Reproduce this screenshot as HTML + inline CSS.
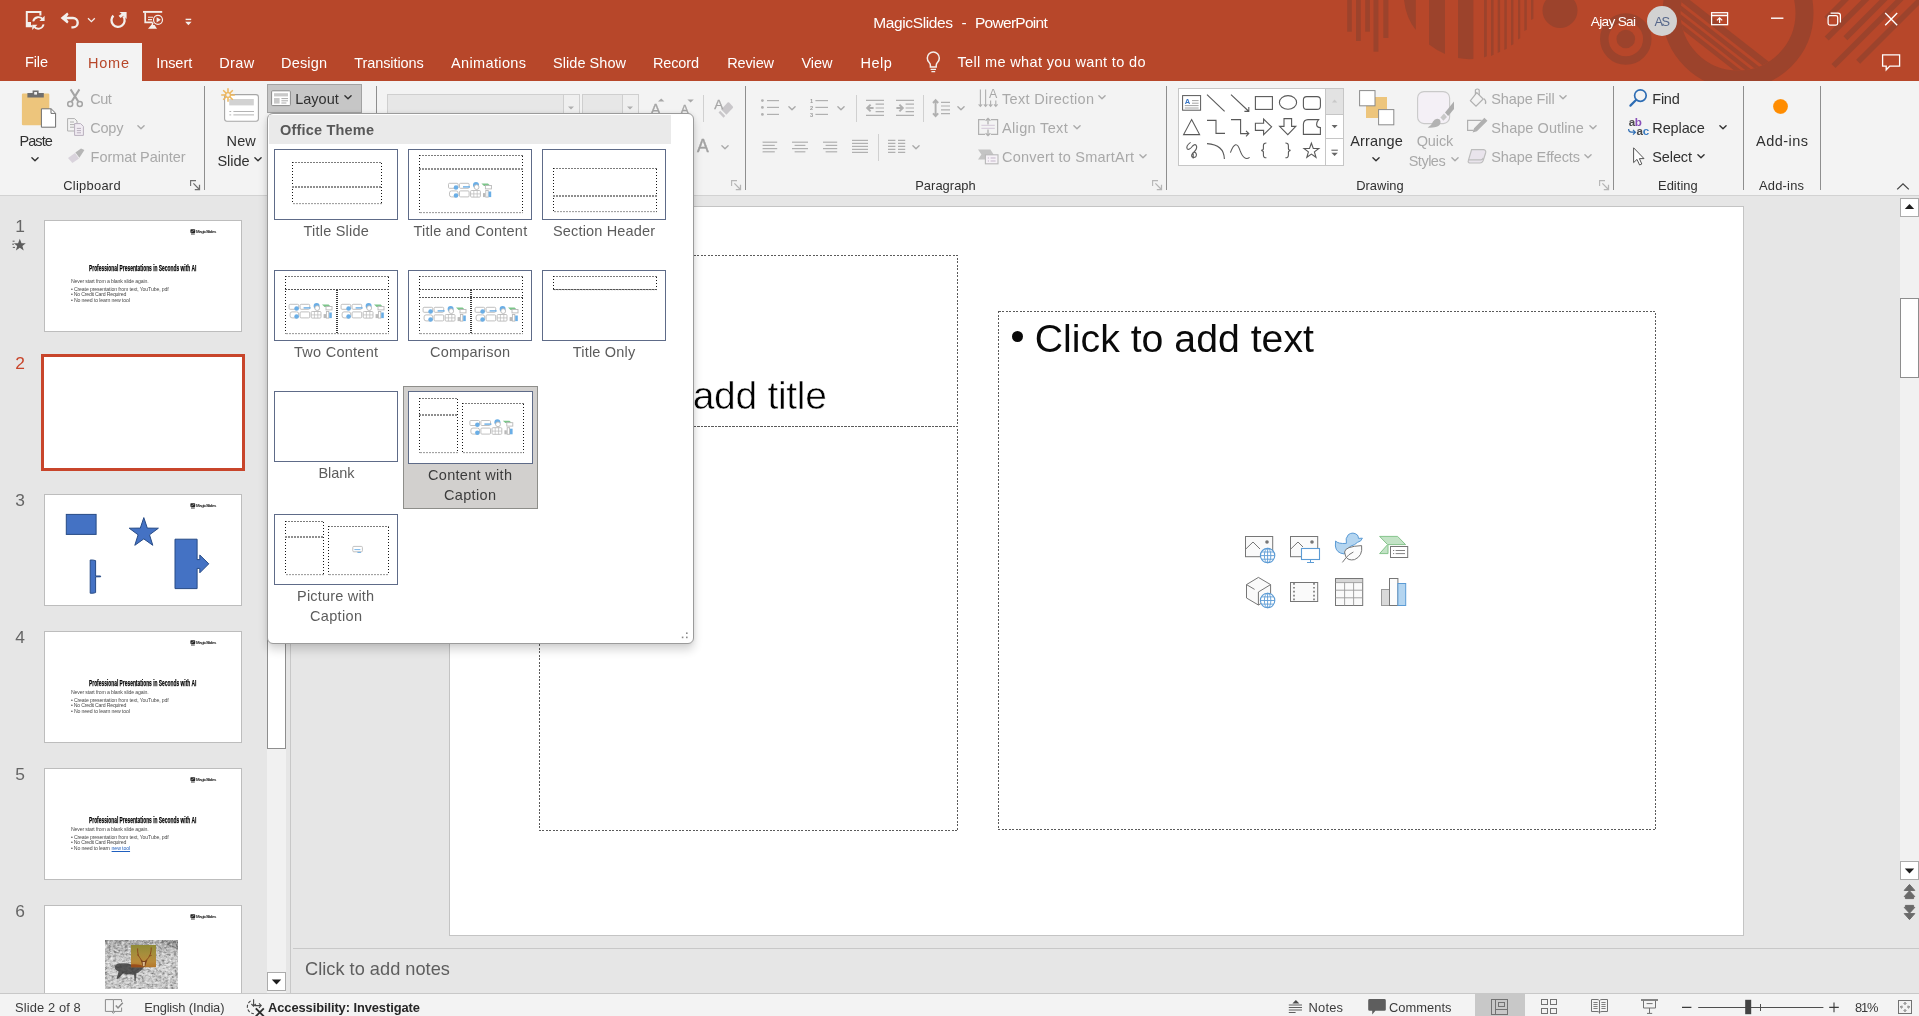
<!DOCTYPE html>
<html lang="en"><head><meta charset="utf-8"><title>MagicSlides - PowerPoint</title>
<style>
html,body{margin:0;padding:0;}
body{width:1919px;height:1016px;overflow:hidden;background:#E6E6E6;position:relative;font-family:"Liberation Sans",sans-serif;}
.b{position:absolute;box-sizing:border-box;display:block;}
.t{position:absolute;white-space:pre;display:block;}
svg{overflow:visible;}
#app{position:absolute;left:0;top:0;width:1919px;height:1016px;overflow:hidden;will-change:transform;}
</style></head>
<body>
<div id="app">
<!-- sec_title -->
<div class="b" style="left:0px;top:0px;width:1919px;height:81px;background:#B7472A;"></div>
<svg class="b" style="left:0;top:0" width="1919" height="81" viewBox="0 0 1919 81">
<defs><clipPath id="cpin"><circle cx="1738" cy="13" r="57.6"/></clipPath>
<clipPath id="cpr"><rect x="1820" y="0" width="99" height="81"/></clipPath></defs>
<g fill="#9C432C"><rect x="1347.2" y="0" width="4.6" height="31.7"/><rect x="1356" y="0" width="4.8" height="41"/><rect x="1365.2" y="0" width="4.7" height="31.7"/><rect x="1373.5" y="0" width="4.9" height="51.7"/><rect x="1383.3" y="0" width="5.1" height="38"/><path d="M1404 0 Q1406 18 1415.8 30 L1415.8 0 Z"/><path d="M1429 0 L1445 0 L1445 54 Q1436 50 1429 44.5 Z"/><path d="M1458 0 L1473.4 0 L1473.4 59 Q1465 59.5 1458 58 Z"/><path d="M1484 0 L1486.8 0 L1486.8 56.3 L1484 57.5 Z"/><path d="M1491 0 L1493.6 0 L1493.6 54.8 L1491 56 Z"/><path d="M1497.7 0 L1500.1 0 L1500.1 51.8 L1497.7 53 Z"/><path d="M1504.3 0 L1506.8 0 L1506.8 48.8 L1504.3 50 Z"/><path d="M1511 0 L1513.4 0 L1513.4 44.3 L1511 45.5 Z"/><path d="M1518 0 L1520.2 0 L1520.2 38.3 L1518 39.5 Z"/><path d="M1524.3 0 L1526.8 0 L1526.8 29.8 L1524.3 31 Z"/><path d="M1531 0 L1533.4 0 L1533.4 18.8 L1531 20 Z"/><circle cx="1560" cy="10.5" r="17.5"/><circle cx="1625.8" cy="39" r="21.5" fill="none" stroke="#9C432C" stroke-width="8.5"/><circle cx="1625.8" cy="39" r="9.3"/><circle cx="1738" cy="13" r="66.5" fill="none" stroke="#9C432C" stroke-width="18"/><g clip-path="url(#cpin)"><path d="M1640.4 -34.3 L1790.1 82.7" stroke="#9C432C" stroke-width="6.8" fill="none"/><path d="M1635.1 -27.5 L1784.9 89.5" stroke="#9C432C" stroke-width="4.3" fill="none"/><path d="M1630.8 -22.0 L1780.5 95.0" stroke="#9C432C" stroke-width="4.1" fill="none"/><path d="M1626.5 -16.5 L1776.2 100.5" stroke="#9C432C" stroke-width="4.4" fill="none"/></g><g clip-path="url(#cpr)"></g></g>
<g stroke="#9C432C" stroke-width="5.6" fill="none">
<path d="M1826.3 18.7 L1855 -10"/><path d="M1826.7 38.6 L1875.3 -10"/><path d="M1845.4 38.2 L1893.6 -10"/><path d="M1833.5 66.1 L1909.6 -10"/><path d="M1858.2 61.8 L1930 -10"/>
</g>
</svg>
<div class="b" style="left:76px;top:43px;width:66px;height:38px;background:#F3F3F3;"></div>
<svg class="b" style="left:0;top:0" width="220" height="44" viewBox="0 0 220 44" fill="none" stroke="#F3EFEC" stroke-width="1.5">
<path d="M32 26.2 H26.8 V11.9 H40.4 V15.4" stroke-width="2"/>
<path d="M27 22 H31 V26 H27 Z" fill="#F3EFEC" stroke="none"/>
<path d="M33.2 21.4 A5.4 5.4 0 0 1 43 19.6" stroke-width="1.9"/>
<path d="M43.6 24.4 A5.4 5.4 0 0 1 33.8 26.2" stroke-width="1.9"/>
<path d="M44.6 15.8 V21 H39.4 Z M32.2 30 V24.8 H37.4 Z" fill="#F3EFEC" stroke="none"/>
<path d="M65 18 H73 A4.7 4.7 0 0 1 73 27.4 H71.4" stroke-width="2.4"/>
<path d="M60.6 18 L67.2 12.6 L68.6 14.2 L66 18 L68.6 21.8 L67.2 23.4 Z" fill="#F3EFEC" stroke="none"/>
<path d="M88 18.2 L91.4 21.6 L94.8 18.2" stroke-width="1.3"/>
<path d="M113.4 15.6 A6.6 6.6 0 1 0 123.4 16.4" stroke-width="2.3"/>
<path d="M119.4 12 H126.6 V19 L123.4 15.8 L120.6 18 L118.6 15.8 L121.6 13.8 Z" fill="#F3EFEC" stroke="none"/>
<path d="M143 11.9 H162.2" stroke-width="1.9"/>
<path d="M145.2 12.4 V22.4 H152.6" stroke-width="1.7"/>
<path d="M148 17.2 H153 M148 19.6 H152" stroke-width="1.1"/>
<circle cx="158" cy="19.8" r="4.5" stroke-width="1.2"/>
<path d="M156.6 17.2 L160.8 19.8 L156.6 22.4 Z" fill="#F3EFEC" stroke="none"/>
<path d="M151.2 25 H154.6 L157 28.7 H148 Z" fill="#F3EFEC" stroke="none"/>
<path d="M153 22.6 L152 25.4" stroke-width="1.4"/>
<path d="M185.6 19.4 H191.2" stroke-width="1.4"/>
<path d="M185.2 21.8 H191.6 L188.4 25.2 Z" fill="#F3EFEC" stroke="none"/>
</svg>
<span class="t" style="left:873.30px;top:12.00px;font-size:15.5px;line-height:21px;color:#fff;letter-spacing:-0.386px;">MagicSlides</span>
<span class="t" style="left:961.60px;top:12.00px;font-size:15.5px;line-height:21px;color:#fff;">-</span>
<span class="t" style="left:975.00px;top:12.00px;font-size:15.5px;line-height:21px;color:#fff;letter-spacing:-0.718px;">PowerPoint</span>
<span class="t" style="left:1590.80px;top:12.00px;font-size:13.6px;line-height:19px;color:#fff;letter-spacing:-0.670px;">Ajay Sai</span>
<div class="b" style="left:1647px;top:6px;width:30px;height:30px;background:#D2D2D2;border-radius:50%;"></div>
<span class="t" style="left:1654.41px;top:12.00px;font-size:12.8px;line-height:19px;color:#55668A;letter-spacing:-1.500px;">AS</span>
<svg class="b" style="left:1700px;top:0" width="219" height="81" viewBox="1700 0 219 81" fill="none" stroke="#fff" stroke-width="1.25">
<rect x="1711.6" y="12.7" width="16" height="12"/>
<path d="M1711.6 15.5 H1727.6" stroke-width="1.5"/>
<path d="M1719.6 23 V18 M1717 20.4 L1719.6 17.8 L1722.2 20.4"/>
<path d="M1771 18.2 H1783.4" stroke-width="1.4"/>
<rect x="1828.1" y="15.6" width="9.6" height="9.4" rx="1.8"/>
<path d="M1830.6 13.1 H1838 Q1840.4 13.1 1840.4 15.5 V22.4"/>
<path d="M1885.2 13 L1897.2 25.2 M1897.2 13 L1885.2 25.2" stroke-width="1.35"/>
<path d="M1882.6 54.9 H1899.6 V66.1 H1889.8 L1886.2 69.8 V66.1 H1882.6 Z" stroke-width="1.3"/>
</svg>
<span class="t" style="left:25.00px;top:52.00px;font-size:14.5px;line-height:20px;color:#fff;letter-spacing:-0.121px;">File</span>
<span class="t" style="left:88.00px;top:53.00px;font-size:14.5px;line-height:20px;color:#B7472A;letter-spacing:0.774px;">Home</span>
<span class="t" style="left:156.20px;top:53.00px;font-size:14.5px;line-height:20px;color:#fff;letter-spacing:-0.053px;">Insert</span>
<span class="t" style="left:219.20px;top:53.00px;font-size:14.5px;line-height:20px;color:#fff;letter-spacing:0.388px;">Draw</span>
<span class="t" style="left:281.00px;top:53.00px;font-size:14.5px;line-height:20px;color:#fff;letter-spacing:0.173px;">Design</span>
<span class="t" style="left:354.20px;top:53.00px;font-size:14.5px;line-height:20px;color:#fff;letter-spacing:-0.078px;">Transitions</span>
<span class="t" style="left:451.00px;top:53.00px;font-size:14.5px;line-height:20px;color:#fff;letter-spacing:0.363px;">Animations</span>
<span class="t" style="left:553.00px;top:53.00px;font-size:14.5px;line-height:20px;color:#fff;letter-spacing:0.051px;">Slide Show</span>
<span class="t" style="left:653.00px;top:53.00px;font-size:14.5px;line-height:20px;color:#fff;letter-spacing:-0.149px;">Record</span>
<span class="t" style="left:727.30px;top:53.00px;font-size:14.5px;line-height:20px;color:#fff;letter-spacing:-0.169px;">Review</span>
<span class="t" style="left:801.40px;top:53.00px;font-size:14.5px;line-height:20px;color:#fff;letter-spacing:0.011px;">View</span>
<span class="t" style="left:860.50px;top:53.00px;font-size:14.5px;line-height:20px;color:#fff;letter-spacing:0.459px;">Help</span>
<span class="t" style="left:957.50px;top:52.00px;font-size:14.5px;line-height:20px;color:#fff;letter-spacing:0.349px;">Tell me what you want to do</span>
<svg class="b" style="left:922px;top:48px" width="22" height="28" viewBox="922 48 22 28" fill="none" stroke="#F3EFEC" stroke-width="1.5">
<path d="M930.4 67 V65.4 Q930.4 63.6 929 62.2 A6 6 0 1 1 937.6 62.2 Q936.2 63.6 936.2 65.4 V67 Z"/>
<path d="M930.6 69.4 H936 M931.4 71.6 H935.2" stroke-width="1.2"/>
</svg>
<!-- sec_ribbon -->
<div class="b" style="left:0px;top:81px;width:1919px;height:114px;background:#F3F3F3;"></div>
<div class="b" style="left:0px;top:195px;width:1919px;height:1px;background:#D2D2D2;"></div>
<svg class="b" style="left:16px;top:86px" width="48" height="46" viewBox="16 86 48 46">
<rect x="21.9" y="93.6" width="27.4" height="31.6" rx="1.2" fill="#EDC57C"/>
<path d="M27.4 97.6 V93 H32.6 V90.4 H38.6 V93 H43.8 V97.6 Z" fill="#6F6F6F"/>
<rect x="34.2" y="92" width="2.8" height="2.6" fill="#F3F3F3"/>
<path d="M41.4 108.8 H51.2 L55.6 113.2 V127.2 H41.4 Z" fill="#fff" stroke="#6F6F6F" stroke-width="1"/>
<path d="M51 109 V113.4 H55.4" fill="none" stroke="#6F6F6F" stroke-width="1"/>
</svg>
<span class="t" style="left:19.50px;top:131.00px;font-size:14.5px;line-height:20px;color:#303030;letter-spacing:-0.945px;">Paste</span>
<svg class="b" style="left:29.299999999999997px;top:153.4px;" width="12" height="12" viewBox="0 0 12 12"><path d="M2.9 4.75 L6 7.85 L9.1 4.75" fill="none" stroke="#303030" stroke-width="1.35" stroke-linecap="round" stroke-linejoin="round"/></svg>
<svg class="b" style="left:64px;top:86px" width="24" height="82" viewBox="64 86 24 82" fill="none" stroke="#B0B0B0" stroke-width="1.3">
<path d="M70.6 89.4 L78.2 101.4 M79.4 89.4 L71.8 101.4" stroke="#A4A4A4" stroke-width="2"/>
<circle cx="70.2" cy="104" r="2.5" stroke="#A4A4A4" stroke-width="1.5"/><circle cx="79.8" cy="104" r="2.5" stroke="#A4A4A4" stroke-width="1.5"/>
<path d="M67.6 118.6 H74.6 L77 121 V131 H67.6 Z M70 122 H74 M70 124.6 H74.6 M70 127.2 H74.6" stroke-width="1"/>
<path d="M74.6 123.6 H80.6 L83.4 126.4 V135.4 H74.6 Z" fill="#F1ECF3" stroke="#B9B0BE" stroke-width="1"/>
<path d="M76.8 128.4 H81 M76.8 130.6 H81 M76.8 132.8 H81" stroke="#B9B0BE" stroke-width="1"/>
<path d="M68 158 L75 153 L79 158.6 L72.4 163 Z" fill="#D9D3DC" stroke="none"/>
<path d="M75.4 152.4 L81 148.6 L84.4 150 L79.4 157.8 Z" fill="#B5B5B5" stroke="none"/>
</svg>
<span class="t" style="left:90.30px;top:89.00px;font-size:14.5px;line-height:20px;color:#A9A9A9;letter-spacing:-0.582px;">Cut</span>
<span class="t" style="left:90.30px;top:118.00px;font-size:14.5px;line-height:20px;color:#A9A9A9;letter-spacing:-0.250px;">Copy</span>
<svg class="b" style="left:135px;top:121.3px;" width="12" height="12" viewBox="0 0 12 12"><path d="M2.9 4.75 L6 7.85 L9.1 4.75" fill="none" stroke="#A9A9A9" stroke-width="1.35" stroke-linecap="round" stroke-linejoin="round"/></svg>
<span class="t" style="left:90.60px;top:147.00px;font-size:14.5px;line-height:20px;color:#A9A9A9;letter-spacing:-0.069px;">Format Painter</span>
<span class="t" style="left:63.30px;top:176.00px;font-size:12.9px;line-height:19px;color:#303030;letter-spacing:0.260px;">Clipboard</span>
<svg class="b" style="left:189.8px;top:180px;" width="11" height="11" viewBox="0 0 11 11"><path d="M0.6 6 V0.6 H6" fill="none" stroke="#6E6E6E" stroke-width="1.1"/><path d="M3.4 3.4 L9.2 9.2 M4.8 9.5 H9.5 V4.8" fill="none" stroke="#6E6E6E" stroke-width="1.25"/></svg>
<div class="b" style="left:204px;top:86px;width:1px;height:104px;background:#8E8E8E;"></div>
<svg class="b" style="left:218px;top:86px" width="46" height="40" viewBox="218 86 46 40">
<rect x="224.6" y="94.6" width="33.8" height="26.6" rx="2.4" fill="#fff" stroke="#A6A6A6" stroke-width="1.1"/>
<rect x="229.2" y="99" width="24.6" height="6.4" fill="#D2D2D2"/>
<path d="M229.4 111.5 H231.2 M233.4 111.5 H254 M229.4 114.9 H231.2 M233.4 114.9 H254" stroke="#B4B4B4" stroke-width="1"/>
<g stroke="#EDB75E" stroke-width="1.5" fill="none">
<path d="M228 88.2 V101.8 M221.2 95 H234.8 M223.2 90.2 L232.8 99.8 M232.8 90.2 L223.2 99.8"/>
</g>
<circle cx="228" cy="95" r="2.4" fill="#F3F3F3" stroke="#EDB75E" stroke-width="1.3"/>
</svg>
<span class="t" style="left:226.60px;top:131.00px;font-size:14.5px;line-height:20px;color:#303030;letter-spacing:0.096px;">New</span>
<span class="t" style="left:217.50px;top:151.00px;font-size:14.5px;line-height:20px;color:#303030;letter-spacing:-0.061px;">Slide</span>
<svg class="b" style="left:252px;top:153.4px;" width="12" height="12" viewBox="0 0 12 12"><path d="M2.9 4.75 L6 7.85 L9.1 4.75" fill="none" stroke="#303030" stroke-width="1.35" stroke-linecap="round" stroke-linejoin="round"/></svg>
<div class="b" style="left:267px;top:84px;width:95px;height:29px;background:#C6C6C6;border:1px solid #A2A2A2;"></div>
<svg class="b" style="left:270px;top:88px" width="24" height="20" viewBox="270 88 24 20">
<rect x="271.6" y="90.8" width="18.8" height="14.8" rx="1" fill="#fff" stroke="#8A8A8A" stroke-width="1"/>
<rect x="274" y="93.2" width="14" height="3.2" fill="#C9C9C9"/>
<rect x="274" y="98" width="5.6" height="5.6" fill="#C9C9C9"/>
<path d="M281.4 98.6 H288 M281.4 100.8 H288 M281.4 103 H286.4" stroke="#ABABAB" stroke-width="1"/>
</svg>
<span class="t" style="left:295.30px;top:89.00px;font-size:14.5px;line-height:20px;color:#303030;letter-spacing:-0.027px;">Layout</span>
<svg class="b" style="left:341.5px;top:91.4px;" width="12" height="12" viewBox="0 0 12 12"><path d="M2.9 4.75 L6 7.85 L9.1 4.75" fill="none" stroke="#303030" stroke-width="1.35" stroke-linecap="round" stroke-linejoin="round"/></svg>
<div class="b" style="left:376px;top:86px;width:1px;height:104px;background:#8E8E8E;"></div>
<div class="b" style="left:387px;top:94px;width:193px;height:26px;background:#E7E7E7;border:1px solid #CFCFCF;"></div>
<div class="b" style="left:563px;top:94px;width:17px;height:26px;background:#EFEFEF;border:1px solid #CFCFCF;"></div>
<div class="b" style="left:582px;top:94px;width:57px;height:26px;background:#E7E7E7;border:1px solid #CFCFCF;"></div>
<div class="b" style="left:622px;top:94px;width:17px;height:26px;background:#EFEFEF;border:1px solid #CFCFCF;"></div>
<svg class="b" style="left:560px;top:100px;" width="90" height="14" viewBox="0 0 90 14"><path d="M8 6.4 H14 L11 9.4 Z M67 6.4 H73 L70 9.4 Z" fill="#B0B0B0"/></svg>
<svg class="b" style="left:645px;top:90px" width="100" height="70" viewBox="645 90 100 70" fill="none" stroke="#A8A8A8" stroke-width="1.8">
<path d="M658 101.6 L661.2 98.6 L664.4 101.6 Z" fill="#A8A8A8" stroke="none"/>
<path d="M687.4 99.6 H693.8 L690.6 102.6 Z" fill="#A8A8A8" stroke="none"/>
<path d="M727.6 102.4 Q728.4 101.8 729.2 102.6 L732.8 106.4 Q733.4 107.2 732.8 108 L726.4 114.8 L721.2 109.4 Z" fill="#C9C7CA" stroke="none"/>
<path d="M719.4 111.6 L724.4 116.8" stroke="#C9C7CA" stroke-width="2.4"/>
</svg>
<span class="t" style="left:650.76px;top:99.00px;font-size:14.5px;line-height:20px;color:#A6A6A6;-webkit-text-stroke:0.35px #A6A6A6;">A</span>
<span class="t" style="left:680.40px;top:101.00px;font-size:12.6px;line-height:18px;color:#A6A6A6;-webkit-text-stroke:0.35px #A6A6A6;">A</span>
<span class="t" style="left:714.33px;top:95.00px;font-size:13.4px;line-height:19px;color:#A6A6A6;-webkit-text-stroke:0.3px #A6A6A6;">A</span>
<span class="t" style="left:696.93px;top:134.00px;font-size:17.6px;line-height:24px;color:#A2A2A2;-webkit-text-stroke:0.4px #A2A2A2;">A</span>
<div class="b" style="left:703px;top:95px;width:1px;height:27px;background:#D0D0D0;"></div>
<svg class="b" style="left:719px;top:141.4px;" width="12" height="12" viewBox="0 0 12 12"><path d="M2.9 4.75 L6 7.85 L9.1 4.75" fill="none" stroke="#A9A9A9" stroke-width="1.35" stroke-linecap="round" stroke-linejoin="round"/></svg>
<svg class="b" style="left:731px;top:180px;" width="11" height="11" viewBox="0 0 11 11"><path d="M0.6 6 V0.6 H6" fill="none" stroke="#B5B5B5" stroke-width="1.1"/><path d="M3.4 3.4 L9.2 9.2 M4.8 9.5 H9.5 V4.8" fill="none" stroke="#B5B5B5" stroke-width="1.25"/></svg>
<div class="b" style="left:745px;top:86px;width:1px;height:104px;background:#8E8E8E;"></div>
<svg class="b" style="left:750px;top:84px" width="260" height="90" viewBox="750 84 260 90" fill="none" stroke="#B0B0B0" stroke-width="1.2"><circle cx="762.4" cy="100.6" r="1.4" fill="#B0B0B0" stroke="none"/><path d="M767 100.6 H779"/><path d="M815.4 100.6 H828"/><circle cx="762.4" cy="107.4" r="1.4" fill="#B0B0B0" stroke="none"/><path d="M767 107.4 H779"/><path d="M815.4 107.4 H828"/><circle cx="762.4" cy="114.4" r="1.4" fill="#B0B0B0" stroke="none"/><path d="M767 114.4 H779"/><path d="M815.4 114.4 H828"/><path d="M866 100.4 H884 M866 115.4 H884 M875.6 104.2 H884 M875.6 108 H884 M875.6 111.6 H884"/><path d="M896 100.4 H914 M896 115.4 H914 M905.6 104.2 H914 M905.6 108 H914 M905.6 111.6 H914"/><path d="M873.6 108 H867.4 M870.6 104.6 L867.2 108 L870.6 111.4" stroke-width="2"/><path d="M896.4 108 H902.6 M899.4 104.6 L902.8 108 L899.4 111.4" stroke-width="2"/><path d="M941 102.4 H950 M941 106 H950 M941 109.8 H950 M941 113.6 H950"/><path d="M935.6 100.4 V116 M933 103 L935.6 100.2 L938.2 103 M933 113.4 L935.6 116.2 L938.2 113.4" stroke-width="1.9"/><path d="M762.6 142.2 H777.2"/><path d="M792 142.2 H808"/><path d="M823 142.2 H837.2"/><path d="M762.6 145.4 H774.8000000000001"/><path d="M794.6 145.4 H805.4"/><path d="M825.6 145.4 H837.2"/><path d="M762.6 148.6 H777.2"/><path d="M792 148.6 H808"/><path d="M823 148.6 H837.2"/><path d="M762.6 151.8 H774.8000000000001"/><path d="M794.6 151.8 H805.4"/><path d="M825.6 151.8 H837.2"/><path d="M852 140.4 H868"/><path d="M888 140.4 H895.4 M898 140.4 H905.2"/><path d="M852 143.4 H868"/><path d="M888 143.4 H895.4 M898 143.4 H905.2"/><path d="M852 146.4 H868"/><path d="M888 146.4 H895.4 M898 146.4 H905.2"/><path d="M852 149.4 H868"/><path d="M888 149.4 H895.4 M898 149.4 H905.2"/><path d="M852 152.4 H868"/><path d="M888 152.4 H895.4 M898 152.4 H905.2"/><path d="M980.4 89.4 V106 M978.6 104.4 L980.4 106.4 L982.2 104.4 M985.6 89.4 V106 M983.8 104.4 L985.6 106.4 L987.4 104.4 M990.6 100.6 V106 M988.8 104.4 L990.6 106.4 L992.4 104.4 M995.8 100.6 V106 M994 104.4 L995.8 106.4 L997.6 104.4" stroke-width="1.1"/><path d="M985 119.6 H978.6 V134.4 H985 M991 119.6 H997.6 V134.4 H991" stroke-width="1.2"/><path d="M988 118.4 V124.4 M985.6 120.8 L988 118.4 L990.4 120.8 M988 129.6 V135.6 M985.6 133.2 L988 135.6 L990.4 133.2" stroke-width="1.3"/><path d="M981.4 125.4 H994.8 M981.4 128.4 H994.8" stroke="#D9D0DD" stroke-width="1.1"/><path d="M978 149.4 H990.4 L993.6 154.4 L990.4 159.4 H978 L981.4 154.4 Z" fill="#C4C4C4" stroke="none"/><rect x="985.4" y="154.8" width="12.6" height="9" fill="#F6F2F7" stroke="#B8B8B8" stroke-width="1.1"/><path d="M987.8 158 H989 M990.6 158 H995.6 M987.8 161 H989 M990.6 161 H995.6" stroke="#C3B5C9" stroke-width="1"/></svg>
<span class="t" style="left:810.04px;top:96.00px;font-size:5.6px;line-height:10px;color:#9A9A9A;font-weight:700;">1</span>
<span class="t" style="left:810.04px;top:103.00px;font-size:5.6px;line-height:10px;color:#9A9A9A;font-weight:700;">2</span>
<span class="t" style="left:810.04px;top:110.00px;font-size:5.6px;line-height:10px;color:#9A9A9A;font-weight:700;">3</span>
<svg class="b" style="left:786px;top:102.4px;" width="12" height="12" viewBox="0 0 12 12"><path d="M2.9 4.75 L6 7.85 L9.1 4.75" fill="none" stroke="#A9A9A9" stroke-width="1.35" stroke-linecap="round" stroke-linejoin="round"/></svg>
<svg class="b" style="left:835px;top:102.4px;" width="12" height="12" viewBox="0 0 12 12"><path d="M2.9 4.75 L6 7.85 L9.1 4.75" fill="none" stroke="#A9A9A9" stroke-width="1.35" stroke-linecap="round" stroke-linejoin="round"/></svg>
<svg class="b" style="left:955px;top:102.4px;" width="12" height="12" viewBox="0 0 12 12"><path d="M2.9 4.75 L6 7.85 L9.1 4.75" fill="none" stroke="#A9A9A9" stroke-width="1.35" stroke-linecap="round" stroke-linejoin="round"/></svg>
<svg class="b" style="left:910px;top:141.4px;" width="12" height="12" viewBox="0 0 12 12"><path d="M2.9 4.75 L6 7.85 L9.1 4.75" fill="none" stroke="#A9A9A9" stroke-width="1.35" stroke-linecap="round" stroke-linejoin="round"/></svg>
<div class="b" style="left:856px;top:95px;width:1px;height:27px;background:#D0D0D0;"></div>
<div class="b" style="left:923px;top:95px;width:1px;height:27px;background:#D0D0D0;"></div>
<div class="b" style="left:878px;top:134px;width:1px;height:27px;background:#D0D0D0;"></div>
<span class="t" style="left:989.06px;top:85.00px;font-size:12.4px;line-height:18px;color:#A8A8A8;">A</span>
<span class="t" style="left:1002.00px;top:89.00px;font-size:14.5px;line-height:20px;color:#A9A9A9;letter-spacing:0.320px;">Text Direction</span>
<svg class="b" style="left:1096.4px;top:91.4px;" width="12" height="12" viewBox="0 0 12 12"><path d="M2.9 4.75 L6 7.85 L9.1 4.75" fill="none" stroke="#A9A9A9" stroke-width="1.35" stroke-linecap="round" stroke-linejoin="round"/></svg>
<span class="t" style="left:1002.00px;top:118.00px;font-size:14.5px;line-height:20px;color:#A9A9A9;letter-spacing:0.344px;">Align Text</span>
<svg class="b" style="left:1070.8px;top:120.6px;" width="12" height="12" viewBox="0 0 12 12"><path d="M2.9 4.75 L6 7.85 L9.1 4.75" fill="none" stroke="#A9A9A9" stroke-width="1.35" stroke-linecap="round" stroke-linejoin="round"/></svg>
<span class="t" style="left:1002.00px;top:147.00px;font-size:14.5px;line-height:20px;color:#A9A9A9;letter-spacing:0.215px;">Convert to SmartArt</span>
<svg class="b" style="left:1136.5px;top:149.6px;" width="12" height="12" viewBox="0 0 12 12"><path d="M2.9 4.75 L6 7.85 L9.1 4.75" fill="none" stroke="#A9A9A9" stroke-width="1.35" stroke-linecap="round" stroke-linejoin="round"/></svg>
<span class="t" style="left:915.20px;top:176.00px;font-size:12.9px;line-height:19px;color:#303030;letter-spacing:0.045px;">Paragraph</span>
<svg class="b" style="left:1152px;top:180px;" width="11" height="11" viewBox="0 0 11 11"><path d="M0.6 6 V0.6 H6" fill="none" stroke="#B5B5B5" stroke-width="1.1"/><path d="M3.4 3.4 L9.2 9.2 M4.8 9.5 H9.5 V4.8" fill="none" stroke="#B5B5B5" stroke-width="1.25"/></svg>
<div class="b" style="left:1166px;top:86px;width:1px;height:104px;background:#8E8E8E;"></div>
<div class="b" style="left:1178px;top:88px;width:166px;height:78px;background:#fff;border:1px solid #C6C6C6;"></div>
<div class="b" style="left:1325px;top:88px;width:19px;height:27px;background:#E2E2E2;border:1px solid #C6C6C6;"></div>
<div class="b" style="left:1325px;top:114px;width:19px;height:25px;background:#fff;border:1px solid #C6C6C6;"></div>
<div class="b" style="left:1325px;top:138px;width:19px;height:28px;background:#fff;border:1px solid #C6C6C6;"></div>
<svg class="b" style="left:1178px;top:88px" width="148" height="78" viewBox="1178 88 148 78" fill="none" stroke="#595959" stroke-width="1.1"><rect x="1182.6" y="95.6" width="18" height="14.6" fill="#fff" stroke="#595959" stroke-width="1"/><path d="M1192 100.6 H1198.6 M1192 103.2 H1198.6 M1184.8 105.6 H1198.6 M1184.8 108 H1198.6" stroke="#9A9A9A" stroke-width="0.9"/><path d="M1207 94.6 L1224.6 111.4"/><path d="M1231 94.6 L1248.4 111 M1244.4 111.4 H1248.8 V107"/><rect x="1255.4" y="96.6" width="17" height="12.8"/><ellipse cx="1288" cy="102.4" rx="8.6" ry="6.8"/><rect x="1303.4" y="96.6" width="17" height="12.8" rx="3.4"/><path d="M1191.6 119.6 L1199.6 134.6 H1183.6 Z"/><path d="M1207 120.4 H1216 V133.4 H1225"/><path d="M1231 119.6 H1240.6 V133.6 H1248.6 M1246 130.8 L1248.8 133.6 L1246 136.4"/><path d="M1255.4 123.2 H1263.6 V119 L1271.6 126.8 L1263.6 134.6 V130.4 H1255.4 Z"/><path d="M1284 118.6 H1291.6 V126.4 H1295.8 L1287.8 134.6 L1279.6 126.4 H1284 Z"/><path d="M1303.4 134.4 V124 Q1303.8 119.8 1308 119.6 H1318.6 Q1316.6 121.8 1316.6 124.6 Q1316.8 127.4 1320.4 127.6 V134.4 Z"/><path d="M1190.6 142.4 Q1185.6 146 1187.2 148.8 Q1189 150.8 1192.6 146 Q1195.4 143.2 1196.6 146.2 Q1197.4 149.4 1192.6 153.4 Q1190.4 156.4 1193 157.4 Q1196.6 157.8 1196.4 154.4 Q1195.6 151.6 1193.2 152.4 V158.4"/><path d="M1207 143.6 Q1224 144.6 1224.4 159"/><path d="M1230.4 152.6 Q1236 138 1240 150.4 Q1244 161.4 1249.6 157.4"/><path d="M1266.4 143 Q1263.2 143 1263.4 146 V148.4 Q1263.4 150.4 1261.2 150.4 Q1263.4 150.4 1263.4 152.6 V154.8 Q1263.2 157.8 1266.4 157.8"/><path d="M1285.4 143 Q1288.6 143 1288.4 146 V148.4 Q1288.4 150.4 1290.6 150.4 Q1288.4 150.4 1288.4 152.6 V154.8 Q1288.6 157.8 1285.4 157.8"/><path d="M1311.4 143.2 L1313.3 148.5 H1318.8 L1314.4 151.9 L1316 157.3 L1311.4 154.1 L1306.8 157.3 L1308.4 151.9 L1304 148.5 H1309.5 Z"/></svg>
<span class="t" style="left:1184.86px;top:95.00px;font-size:7.6px;line-height:13px;color:#3A76C4;font-weight:700;">A</span>
<svg class="b" style="left:1325px;top:88px;" width="19" height="78" viewBox="0 0 19 78"><path d="M7 14.4 L9.6 11.6 L12.2 14.4 Z" fill="#C8C8C8"/><path d="M6.6 37 H12.6 L9.6 40.2 Z" fill="#666"/><path d="M6.4 62.2 H12.8" stroke="#666" stroke-width="1.1"/><path d="M6.4 64.8 H12.8 L9.6 68 Z" fill="#666"/></svg>
<svg class="b" style="left:1355px;top:86px" width="44" height="42" viewBox="1355 86 44 42">
<rect x="1366" y="97" width="21" height="21" fill="#EDC57C"/>
<rect x="1359.6" y="90.6" width="15.4" height="15.2" fill="#fff" stroke="#8A8A8A" stroke-width="1"/>
<rect x="1378.6" y="109.6" width="15.2" height="15.2" fill="#fff" stroke="#8A8A8A" stroke-width="1"/>
</svg>
<span class="t" style="left:1350.30px;top:131.00px;font-size:14.5px;line-height:20px;color:#303030;letter-spacing:0.152px;">Arrange</span>
<svg class="b" style="left:1370.3px;top:153.4px;" width="12" height="12" viewBox="0 0 12 12"><path d="M2.9 4.75 L6 7.85 L9.1 4.75" fill="none" stroke="#303030" stroke-width="1.35" stroke-linecap="round" stroke-linejoin="round"/></svg>
<svg class="b" style="left:1412px;top:86px" width="46" height="44" viewBox="1412 86 46 44">
<rect x="1417.6" y="91.6" width="32" height="32" rx="6.4" fill="#F4F0F6" stroke="#C9C9C9" stroke-width="1.1"/>
<path d="M1427.6 127.6 Q1431.6 125.6 1433 121.4 Q1435.4 117.6 1439.4 119.2 Q1441.6 121.6 1439.6 125 Q1436.6 128 1427.6 127.6 Z" fill="#B3B3B3"/>
<path d="M1440.4 117.6 L1443.4 120.8 L1447 117 L1444 113.6 Z" fill="#C8C8C8"/>
<path d="M1445 112.4 L1448.2 116 L1454 109 V101.6 Z" fill="#ADADAD"/>
</svg>
<span class="t" style="left:1416.70px;top:131.00px;font-size:14.5px;line-height:20px;color:#A9A9A9;letter-spacing:-0.116px;">Quick</span>
<span class="t" style="left:1408.70px;top:151.00px;font-size:14.5px;line-height:20px;color:#A9A9A9;letter-spacing:-0.497px;">Styles</span>
<svg class="b" style="left:1448.5px;top:153.4px;" width="12" height="12" viewBox="0 0 12 12"><path d="M2.9 4.75 L6 7.85 L9.1 4.75" fill="none" stroke="#A9A9A9" stroke-width="1.35" stroke-linecap="round" stroke-linejoin="round"/></svg>
<svg class="b" style="left:1464px;top:86px" width="28" height="84" viewBox="1464 86 28 84" fill="none" stroke="#B0B0B0" stroke-width="1.2">
<path d="M1476.8 92.6 L1483.2 99 L1476 106.2 L1470.4 100.6 Z"/>
<path d="M1475.4 94.6 V90 Q1477.4 88 1479.2 90 V95"/>
<path d="M1484 98.6 Q1486.6 101 1485.4 104"/>
<path d="M1481.6 120.4 H1467.6 V130.4 H1473.6"/>
<path d="M1484.4 118.6 L1486.6 120.8 L1476.6 130.6 L1473.6 131.6 L1474.6 128.6 Z" fill="#B0B0B0"/>
<path d="M1471.6 149.6 H1483.6 Q1486.4 150.2 1485.6 153 L1483 161 Q1482 163 1480 163 H1469.4 Q1467.6 162.4 1468.4 160.4 Z" fill="#E9E4EC" stroke="#BDBDBD"/>
<path d="M1468.6 159.8 H1481 Q1482.8 159.6 1483.2 158" stroke="#BDBDBD"/>
</svg>
<span class="t" style="left:1491.30px;top:89.00px;font-size:14.5px;line-height:20px;color:#A9A9A9;letter-spacing:-0.120px;">Shape Fill</span>
<svg class="b" style="left:1557px;top:91.4px;" width="12" height="12" viewBox="0 0 12 12"><path d="M2.9 4.75 L6 7.85 L9.1 4.75" fill="none" stroke="#A9A9A9" stroke-width="1.35" stroke-linecap="round" stroke-linejoin="round"/></svg>
<span class="t" style="left:1491.30px;top:118.00px;font-size:14.5px;line-height:20px;color:#A9A9A9;letter-spacing:0.050px;">Shape Outline</span>
<svg class="b" style="left:1586.5px;top:120.6px;" width="12" height="12" viewBox="0 0 12 12"><path d="M2.9 4.75 L6 7.85 L9.1 4.75" fill="none" stroke="#A9A9A9" stroke-width="1.35" stroke-linecap="round" stroke-linejoin="round"/></svg>
<span class="t" style="left:1491.30px;top:147.00px;font-size:14.5px;line-height:20px;color:#A9A9A9;letter-spacing:-0.110px;">Shape Effects</span>
<svg class="b" style="left:1582.3px;top:149.6px;" width="12" height="12" viewBox="0 0 12 12"><path d="M2.9 4.75 L6 7.85 L9.1 4.75" fill="none" stroke="#A9A9A9" stroke-width="1.35" stroke-linecap="round" stroke-linejoin="round"/></svg>
<span class="t" style="left:1356.20px;top:176.00px;font-size:12.9px;line-height:19px;color:#303030;letter-spacing:0.030px;">Drawing</span>
<svg class="b" style="left:1598.8px;top:180px;" width="11" height="11" viewBox="0 0 11 11"><path d="M0.6 6 V0.6 H6" fill="none" stroke="#B5B5B5" stroke-width="1.1"/><path d="M3.4 3.4 L9.2 9.2 M4.8 9.5 H9.5 V4.8" fill="none" stroke="#B5B5B5" stroke-width="1.25"/></svg>
<div class="b" style="left:1613px;top:86px;width:1px;height:104px;background:#8E8E8E;"></div>
<svg class="b" style="left:1624px;top:86px" width="28" height="84" viewBox="1624 86 28 84" fill="none">
<circle cx="1640.4" cy="95.6" r="5.8" stroke="#2E6DB4" stroke-width="1.7"/>
<path d="M1636 100 L1630.4 105.6" stroke="#2E6DB4" stroke-width="2.2" stroke-linecap="round"/>
<path d="M1628.6 129 Q1628.6 132.2 1631.4 132.2 H1635.2 M1633 129.8 L1635.4 132.2 L1633 134.6" stroke="#2E6DB4" stroke-width="1.2"/>
<path d="M1633.6 147.8 V162.6 L1637 159.4 L1639.6 165 L1641.8 164 L1639.4 158.6 H1644 Z" fill="#fff" stroke="#555" stroke-width="1"/>
</svg>
<span class="t" style="left:1628.80px;top:113.00px;font-size:11.6px;line-height:17px;color:#4A4A4A;font-weight:700;">a</span>
<span class="t" style="left:1634.80px;top:113.00px;font-size:11.6px;line-height:17px;color:#8A4FB8;font-weight:700;">b</span>
<span class="t" style="left:1636.60px;top:122.00px;font-size:11.6px;line-height:17px;color:#4A4A4A;font-weight:700;">a</span>
<span class="t" style="left:1642.80px;top:122.00px;font-size:11.6px;line-height:17px;color:#3A7CC2;font-weight:700;">c</span>
<span class="t" style="left:1652.30px;top:89.00px;font-size:14.5px;line-height:20px;color:#303030;letter-spacing:-0.269px;">Find</span>
<span class="t" style="left:1652.30px;top:118.00px;font-size:14.5px;line-height:20px;color:#303030;letter-spacing:-0.117px;">Replace</span>
<svg class="b" style="left:1716.6px;top:121.4px;" width="12" height="12" viewBox="0 0 12 12"><path d="M2.9 4.75 L6 7.85 L9.1 4.75" fill="none" stroke="#303030" stroke-width="1.35" stroke-linecap="round" stroke-linejoin="round"/></svg>
<span class="t" style="left:1652.30px;top:147.00px;font-size:14.5px;line-height:20px;color:#303030;letter-spacing:-0.120px;">Select</span>
<svg class="b" style="left:1694.6px;top:150px;" width="12" height="12" viewBox="0 0 12 12"><path d="M2.9 4.75 L6 7.85 L9.1 4.75" fill="none" stroke="#303030" stroke-width="1.35" stroke-linecap="round" stroke-linejoin="round"/></svg>
<span class="t" style="left:1658.00px;top:176.00px;font-size:12.9px;line-height:19px;color:#303030;letter-spacing:0.043px;">Editing</span>
<div class="b" style="left:1743px;top:86px;width:1px;height:104px;background:#8E8E8E;"></div>
<div class="b" style="left:1773px;top:99px;width:15px;height:15px;border-radius:50%;background:radial-gradient(circle,#FF8C00 0%,#FF8C00 62%,rgba(255,140,0,0.55) 80%,rgba(255,140,0,0) 100%);"></div>
<span class="t" style="left:1756.00px;top:131.00px;font-size:14.5px;line-height:20px;color:#303030;letter-spacing:0.473px;">Add-ins</span>
<span class="t" style="left:1759.00px;top:176.00px;font-size:12.9px;line-height:19px;color:#303030;letter-spacing:0.210px;">Add-ins</span>
<div class="b" style="left:1820px;top:86px;width:1px;height:104px;background:#8E8E8E;"></div>
<svg class="b" style="left:1895px;top:180px;" width="16" height="14" viewBox="0 0 16 14"><path d="M2.2 9.4 L8 3.8 L13.8 9.4" fill="none" stroke="#444" stroke-width="1.3"/></svg>
<!-- sec_left -->
<div class="b" style="left:44px;top:220px;width:198px;height:112px;background:#fff;border:1px solid #BDBDBD;"></div>
<span class="t" style="left:15.26px;top:214.00px;font-size:17.4px;line-height:24px;color:#666;">1</span>
<svg class="b" style="left:189.8px;top:229px;" width="6" height="6" viewBox="0 0 6 6"><rect x="0.4" y="0.3" width="4.8" height="3.6" rx="0.6" fill="#222"/><path d="M1 5 H4.8" stroke="#222" stroke-width="0.9"/><path d="M1.2 3 L4.4 1.2" stroke="#fff" stroke-width="0.5"/></svg><span class="t" style="left:196.10px;top:227.00px;font-size:4.3px;line-height:9px;color:#222;letter-spacing:-0.465px;font-weight:700;">MagicSlides</span>
<span class="t" style="left:89.3px;top:261.3px;font-size:9.4px;line-height:13px;font-weight:700;color:#000;-webkit-text-stroke:0.25px #000;transform:scaleX(0.5198);transform-origin:0 50%;">Professional Presentations in Seconds with AI</span><span class="t" style="left:70.90px;top:276.00px;font-size:5.2px;line-height:10px;color:#4A4A4A;letter-spacing:-0.148px;">Never start from a blank slide again.</span><span class="t" style="left:70.90px;top:284.00px;font-size:5.2px;line-height:10px;color:#4A4A4A;letter-spacing:-0.133px;">• Create presentation from text, YouTube, pdf</span><span class="t" style="left:70.90px;top:289.00px;font-size:5.2px;line-height:10px;color:#4A4A4A;letter-spacing:-0.204px;">• No Credit Card Required</span><span class="t" style="left:70.90px;top:295.00px;font-size:5.2px;line-height:10px;color:#4A4A4A;letter-spacing:-0.132px;">• No need to learn new tool</span>
<div class="b" style="left:41px;top:354px;width:204px;height:117px;background:#fff;border:3px solid #C8452B;"></div>
<span class="t" style="left:15.26px;top:351.00px;font-size:17.4px;line-height:24px;color:#C8452B;">2</span>
<div class="b" style="left:44px;top:494px;width:198px;height:112px;background:#fff;border:1px solid #BDBDBD;"></div>
<span class="t" style="left:15.26px;top:488.00px;font-size:17.4px;line-height:24px;color:#666;">3</span>
<svg class="b" style="left:189.8px;top:503px;" width="6" height="6" viewBox="0 0 6 6"><rect x="0.4" y="0.3" width="4.8" height="3.6" rx="0.6" fill="#222"/><path d="M1 5 H4.8" stroke="#222" stroke-width="0.9"/><path d="M1.2 3 L4.4 1.2" stroke="#fff" stroke-width="0.5"/></svg><span class="t" style="left:196.10px;top:501.00px;font-size:4.3px;line-height:9px;color:#222;letter-spacing:-0.465px;font-weight:700;">MagicSlides</span>
<div class="b" style="left:44px;top:631px;width:198px;height:112px;background:#fff;border:1px solid #BDBDBD;"></div>
<span class="t" style="left:15.26px;top:625.00px;font-size:17.4px;line-height:24px;color:#666;">4</span>
<svg class="b" style="left:189.8px;top:640px;" width="6" height="6" viewBox="0 0 6 6"><rect x="0.4" y="0.3" width="4.8" height="3.6" rx="0.6" fill="#222"/><path d="M1 5 H4.8" stroke="#222" stroke-width="0.9"/><path d="M1.2 3 L4.4 1.2" stroke="#fff" stroke-width="0.5"/></svg><span class="t" style="left:196.10px;top:638.00px;font-size:4.3px;line-height:9px;color:#222;letter-spacing:-0.465px;font-weight:700;">MagicSlides</span>
<span class="t" style="left:89.3px;top:676.3px;font-size:9.4px;line-height:13px;font-weight:700;color:#000;-webkit-text-stroke:0.25px #000;transform:scaleX(0.5198);transform-origin:0 50%;">Professional Presentations in Seconds with AI</span><span class="t" style="left:70.90px;top:687.00px;font-size:5.2px;line-height:10px;color:#4A4A4A;letter-spacing:-0.148px;">Never start from a blank slide again.</span><span class="t" style="left:70.90px;top:695.00px;font-size:5.2px;line-height:10px;color:#4A4A4A;letter-spacing:-0.133px;">• Create presentation from text, YouTube, pdf</span><span class="t" style="left:70.90px;top:700.00px;font-size:5.2px;line-height:10px;color:#4A4A4A;letter-spacing:-0.204px;">• No Credit Card Required</span><span class="t" style="left:70.90px;top:706.00px;font-size:5.2px;line-height:10px;color:#4A4A4A;letter-spacing:-0.132px;">• No need to learn new tool</span>
<div class="b" style="left:44px;top:768px;width:198px;height:112px;background:#fff;border:1px solid #BDBDBD;"></div>
<span class="t" style="left:15.26px;top:762.00px;font-size:17.4px;line-height:24px;color:#666;">5</span>
<svg class="b" style="left:189.8px;top:777px;" width="6" height="6" viewBox="0 0 6 6"><rect x="0.4" y="0.3" width="4.8" height="3.6" rx="0.6" fill="#222"/><path d="M1 5 H4.8" stroke="#222" stroke-width="0.9"/><path d="M1.2 3 L4.4 1.2" stroke="#fff" stroke-width="0.5"/></svg><span class="t" style="left:196.10px;top:775.00px;font-size:4.3px;line-height:9px;color:#222;letter-spacing:-0.465px;font-weight:700;">MagicSlides</span>
<span class="t" style="left:89.3px;top:813.3px;font-size:9.4px;line-height:13px;font-weight:700;color:#000;-webkit-text-stroke:0.25px #000;transform:scaleX(0.5198);transform-origin:0 50%;">Professional Presentations in Seconds with AI</span><span class="t" style="left:70.90px;top:824.00px;font-size:5.2px;line-height:10px;color:#4A4A4A;letter-spacing:-0.148px;">Never start from a blank slide again.</span><span class="t" style="left:70.90px;top:832.00px;font-size:5.2px;line-height:10px;color:#4A4A4A;letter-spacing:-0.133px;">• Create presentation from text, YouTube, pdf</span><span class="t" style="left:70.90px;top:837.00px;font-size:5.2px;line-height:10px;color:#4A4A4A;letter-spacing:-0.204px;">• No Credit Card Required</span><span class="t" style="left:70.90px;top:843.00px;font-size:5.2px;line-height:10px;color:#4A4A4A;letter-spacing:-0.153px;">• No need to learn </span><span class="t" style="left:111.60px;top:843.00px;font-size:5.2px;line-height:10px;color:#1F5FBF;letter-spacing:-0.110px;text-decoration:underline;">new tool</span>
<div class="b" style="left:44px;top:905px;width:198px;height:112px;background:#fff;border:1px solid #BDBDBD;"></div>
<span class="t" style="left:15.26px;top:899.00px;font-size:17.4px;line-height:24px;color:#666;">6</span>
<svg class="b" style="left:189.8px;top:914px;" width="6" height="6" viewBox="0 0 6 6"><rect x="0.4" y="0.3" width="4.8" height="3.6" rx="0.6" fill="#222"/><path d="M1 5 H4.8" stroke="#222" stroke-width="0.9"/><path d="M1.2 3 L4.4 1.2" stroke="#fff" stroke-width="0.5"/></svg><span class="t" style="left:196.10px;top:912.00px;font-size:4.3px;line-height:9px;color:#222;letter-spacing:-0.465px;font-weight:700;">MagicSlides</span>
<svg class="b" style="left:12px;top:238px;" width="15" height="14" viewBox="0 0 15 14"><path d="M7.8 0.8 L9.5 5.2 H13.8 L10.4 7.9 L11.7 12.4 L7.8 9.7 L3.9 12.4 L5.2 7.9 L1.8 5.2 H6.1 Z" fill="#5C5C5C"/><path d="M0.6 3.2 H2.6 M0.2 6.2 H2 M0.8 9.4 H3" stroke="#5C5C5C" stroke-width="1"/></svg>
<svg class="b" style="left:44px;top:494px" width="198" height="112" viewBox="44 494 198 112" fill="#4472C4" stroke="#274B86" stroke-width="1">
<rect x="66.3" y="514.4" width="29.8" height="20"/>
<path d="M143.8 517.6 L147.3 528.1 L158.4 528.2 L149.5 534.8 L152.8 545.3 L143.8 538.9 L134.8 545.3 L138.1 534.8 L129.2 528.2 L140.3 528.1 Z"/>
<path d="M90.2 560 Q93 559.8 95.6 560.6 V576 H100.6 V576.8 H95.6 V592.6 Q93 593.6 90.2 593.2 Z"/>
<path d="M175 539.2 H197.1 V559.6 H199.8 V555 L208.8 563.8 L199.8 572.8 V568.4 H197.1 V588.6 H175 Z"/>
</svg>
<svg class="b" style="left:105px;top:940px;overflow:hidden" width="73" height="49" viewBox="0 0 73 49">
<defs>
<filter id="nz" x="0" y="0" width="100%" height="100%" color-interpolation-filters="sRGB"><feTurbulence type="fractalNoise" baseFrequency="0.3 0.45" numOctaves="3" seed="11"/><feColorMatrix type="matrix" values="0 0 0 0 0.3  0 0 0 0 0.3  0 0 0 0 0.3  1.1 1.1 0 0 -0.95"/></filter>
<filter id="nw" x="0" y="0" width="100%" height="100%" color-interpolation-filters="sRGB"><feTurbulence type="fractalNoise" baseFrequency="0.35 0.5" numOctaves="2" seed="3"/><feColorMatrix type="matrix" values="0 0 0 0 1  0 0 0 0 1  0 0 0 0 1  0 1.1 1.1 0 -0.9"/></filter>
<linearGradient id="gg" x1="0" y1="0" x2="0" y2="1"><stop offset="0" stop-color="#9C9C9C"/><stop offset="0.22" stop-color="#B6B6B6"/><stop offset="0.45" stop-color="#D0D0D0"/><stop offset="1" stop-color="#C6C6C6"/></linearGradient>
<linearGradient id="og" x1="0" y1="0" x2="0" y2="1"><stop offset="0" stop-color="#8F8A36"/><stop offset="0.4" stop-color="#A68E3C"/><stop offset="0.75" stop-color="#B98A3A"/><stop offset="1" stop-color="#B4762A"/></linearGradient>
<clipPath id="dc"><rect width="73" height="49"/></clipPath>
</defs>
<g clip-path="url(#dc)">
<rect width="73" height="49" fill="url(#gg)"/>
<path d="M56 0 H73 V9 Q66 8 62 4 Z" fill="#6E6E6E" opacity="0.7"/>
<rect width="73" height="49" filter="url(#nz)"/>
<rect width="73" height="49" filter="url(#nw)"/>
<path d="M9.6 27 Q10 24.4 14 23.6 Q20 22.6 26 24.4 L37.6 25.4 L39 27 Q36 31.6 31.4 33.6 L30.6 41 L29.6 41 L29 34.4 Q23 35 18 33.4 L13 39 L11.6 38.4 L13.6 31.4 Q9.6 30 9.6 27 Z" fill="#333" opacity="0.8"/>
<rect x="26" y="5" width="25" height="22.2" fill="url(#og)"/>
<path d="M26 24.4 Q31 24 36 25 L38.6 27.2 H26 Z" fill="#9A4E1C"/>
<path d="M37 21 Q34.6 17.6 33.4 15.4 Q32.4 12 32.6 8.4 M34 16 L32 14.6 M40.6 21 Q44 18 45.4 14 Q46.4 10.6 46.2 7.4 M44.4 16 L46.6 15.4" stroke="#8A4A1E" stroke-width="1" fill="none"/>
<path d="M35.4 19.6 L37.8 21 L40 21 L42.6 19.4 L41.4 22.4 L40.2 26.6 L37.6 26.6 L36.6 22.4 Z" fill="#7A421C"/>
<path d="M37.6 22 H40 L39.6 26 H38 Z" fill="#D9B98C"/>
</g>
</svg>
<div class="b" style="left:267px;top:196px;width:19px;height:797px;background:#F1F1F1;"></div>
<div class="b" style="left:267px;top:430px;width:19px;height:319px;background:#fff;border:1px solid #8E8E8E;"></div>
<div class="b" style="left:267px;top:972px;width:19px;height:19px;background:#fff;border:1px solid #ABABAB;"></div>
<svg class="b" style="left:267px;top:972px;" width="19" height="19" viewBox="0 0 19 19"><path d="M4.8 7.6 H14.2 L9.5 12.6 Z" fill="#1E1E1E"/></svg>
<div class="b" style="left:290px;top:196px;width:1px;height:797px;background:#C8C8C8;"></div>
<!-- sec_main -->
<div class="b" style="left:449px;top:206px;width:1295px;height:730px;background:#FFFFFF;border:1px solid #C4C4C4;"></div>
<svg class="b" style="left:449px;top:206px" width="1295" height="731" viewBox="449 206 1295 731">
<rect x="539.5" y="255.5" width="418.0" height="171.0" fill="none" stroke="#5A5A5A" stroke-width="1" stroke-dasharray="2 1.5" shape-rendering="crispEdges"/>
<rect x="539.5" y="426.5" width="418.0" height="404.0" fill="none" stroke="#5A5A5A" stroke-width="1" stroke-dasharray="2 1.5" shape-rendering="crispEdges"/>
<rect x="998.5" y="311.5" width="657.0" height="518.0" fill="none" stroke="#5A5A5A" stroke-width="1" stroke-dasharray="2 1.5" shape-rendering="crispEdges"/>
<rect x="1245.5" y="536.5" width="27.2" height="20.2" fill="#FAFAFA" stroke="#767676" stroke-width="1"/><path d="M1245.8 549 L1253 542 L1260 549" fill="none" stroke="#767676" stroke-width="1"/><circle cx="1267" cy="542" r="1.8" fill="#767676"/><circle cx="1267.6" cy="555.6" r="7.2" fill="#fff" stroke="#5B9BD5" stroke-width="1.1"/><ellipse cx="1267.6" cy="555.6" rx="3.24" ry="7.2" fill="none" stroke="#5B9BD5" stroke-width="0.9"/><path d="M1260.3999999999999 555.6 H1274.8 M1267.6 548.4 V562.8000000000001 M1261.48 552.0 H1273.7199999999998 M1261.48 559.2 H1273.7199999999998" stroke="#5B9BD5" stroke-width="0.9" fill="none"/><rect x="1290.5" y="536.5" width="27.2" height="20.2" fill="#FAFAFA" stroke="#767676" stroke-width="1"/><path d="M1290.8 549 L1298 542 L1303 547" fill="none" stroke="#767676" stroke-width="1"/><circle cx="1312" cy="542" r="1.8" fill="#767676"/><rect x="1301.5" y="548.5" width="18" height="11" fill="#fff" stroke="#5B9BD5" stroke-width="1.1"/><path d="M1310.5 559.6 V562.4 M1307 562.5 H1314" stroke="#5B9BD5" stroke-width="1"/><path d="M1335.6 541 Q1338 544 1346.4 543.4 Q1345 538.4 1348.4 534.6 Q1353 531.4 1357.4 535 Q1358.6 537 1358.4 538.4 L1362.4 538.2 Q1361.4 541.4 1357.4 542.4 Q1355 545 1351 546 Q1346 548 1344.4 554 Q1336 553 1335.4 546 Z" fill="#B4D5F0" stroke="#5B9BD5" stroke-width="1"/><path d="M1344.6 552 Q1345 546.4 1361.6 545.6 Q1363 556 1354.6 559.6 Q1348 561 1345.6 556.4 Z" fill="#FCFCFC" stroke="#767676" stroke-width="1"/><path d="M1342.4 562.4 L1345.8 558 Q1348.4 554.4 1353.4 552" fill="none" stroke="#767676" stroke-width="1"/><path d="M1379.6 536.4 H1397.6 L1405.6 544.6 H1388 L1388 553.6 H1379.6 L1387.6 544.6 Z" fill="#C3E3C6" stroke="#86C48C" stroke-width="1"/><rect x="1390.5" y="546.5" width="17.2" height="11" fill="#fff" stroke="#767676" stroke-width="1"/><path d="M1393 550.5 H1394.2 M1395.6 550.5 H1405 M1393 553.6 H1394.2 M1395.6 553.6 H1405" stroke="#767676" stroke-width="0.9"/><path d="M1246.5 584.6 L1258.4 577.4 L1270.6 584.6 V598 L1258.4 605 L1246.5 598 Z" fill="#FAFAFA" stroke="#767676" stroke-width="1"/><path d="M1246.5 584.6 L1254.6 589.4 M1270.6 584.6 L1258.4 592 V605" fill="none" stroke="#767676" stroke-width="1"/><circle cx="1267.6" cy="600.5" r="7.2" fill="#fff" stroke="#5B9BD5" stroke-width="1.1"/><ellipse cx="1267.6" cy="600.5" rx="3.24" ry="7.2" fill="none" stroke="#5B9BD5" stroke-width="0.9"/><path d="M1260.3999999999999 600.5 H1274.8 M1267.6 593.3 V607.7 M1261.48 596.9 H1273.7199999999998 M1261.48 604.1 H1273.7199999999998" stroke="#5B9BD5" stroke-width="0.9" fill="none"/><rect x="1290.5" y="582.5" width="27.2" height="19" fill="#FAFAFA" stroke="#767676" stroke-width="1"/><path d="M1294 583 V601.4 M1314 583 V601.4" stroke="#767676" stroke-width="1.6" stroke-dasharray="1.7 2.2" fill="none"/><rect x="1335.5" y="578.5" width="27.2" height="27" fill="#FAFAFA" stroke="#767676" stroke-width="1"/><rect x="1336" y="579" width="26.2" height="3.4" fill="#D6D6D6"/><path d="M1335.5 582.6 H1362.6 M1335.5 590.2 H1362.6 M1335.5 597.8 H1362.6 M1344.6 582.6 V605.4 M1353.6 582.6 V605.4" stroke="#9A9A9A" stroke-width="0.9" fill="none"/><rect x="1381.5" y="589.5" width="8" height="16" fill="#D9D9D9" stroke="#9A9A9A" stroke-width="1"/><rect x="1389.5" y="578.5" width="8.4" height="27" fill="#FCFCFC" stroke="#767676" stroke-width="1"/><rect x="1397.9" y="583.5" width="7.8" height="22" fill="#B4D5F0" stroke="#5B9BD5" stroke-width="1"/>
</svg>
<span class="t" style="left:556.70px;top:372.00px;font-size:39px;line-height:47px;color:#000;letter-spacing:-0.299px;-webkit-text-stroke:0.55px #FFFFFF;">Click to add title</span>
<div class="b" style="left:1011.6px;top:330.9px;width:11.2px;height:11.2px;background:#0A0A0A;border-radius:50%;"></div>
<span class="t" style="left:1034.80px;top:315.00px;font-size:39.2px;line-height:47px;color:#0A0A0A;letter-spacing:0.020px;">Click to add text</span>
<div class="b" style="left:293px;top:948px;width:1626px;height:1px;background:#C8C8C8;"></div>
<span class="t" style="left:305.00px;top:957.00px;font-size:18.2px;line-height:24px;color:#5E5E5E;letter-spacing:0.020px;">Click to add notes</span>
<div class="b" style="left:1900px;top:198px;width:19px;height:682px;background:#F1F1F1;"></div>
<div class="b" style="left:1900px;top:198px;width:19px;height:19px;background:#fff;border:1px solid #ABABAB;"></div>
<svg class="b" style="left:1900px;top:198px;" width="19" height="19" viewBox="0 0 19 19"><path d="M4.8 11 L9.5 6 L14.2 11 Z" fill="#1E1E1E"/></svg>
<div class="b" style="left:1900px;top:298px;width:19px;height:80px;background:#fff;border:1px solid #8E8E8E;"></div>
<div class="b" style="left:1900px;top:861px;width:19px;height:19px;background:#fff;border:1px solid #ABABAB;"></div>
<svg class="b" style="left:1900px;top:861px;" width="19" height="19" viewBox="0 0 19 19"><path d="M4.8 7.6 H14.2 L9.5 12.6 Z" fill="#1E1E1E"/></svg>
<svg class="b" style="left:1900px;top:882px;" width="19" height="42" viewBox="0 0 19 42"><g fill="#6A6A6A" stroke="#6A6A6A" stroke-width="1" stroke-linejoin="round"><path d="M9.5 2.4 L14.8 8.4 H4.2 Z M9.5 8.8 L14.8 14.6 H13.6 V16.6 H5.4 V14.6 H4.2 Z"/><path d="M9.5 37.6 L14.8 31.6 H4.2 Z M9.5 31.2 L14.8 25.4 H13.6 V23.4 H5.4 V25.4 H4.2 Z"/></g></svg>
<!-- sec_drop -->
<div class="b" style="left:267px;top:113px;width:427px;height:531px;background:#fff;border:1px solid #9B9B9B;border-radius:6px;box-shadow:0 6px 10px rgba(0,0,0,0.16), 0 0 4px rgba(0,0,0,0.08);"></div>
<div class="b" style="left:269px;top:115px;width:402px;height:29px;background:#EAEAEA;"></div>
<span class="t" style="left:280.00px;top:120.00px;font-size:14.5px;line-height:20px;color:#585858;letter-spacing:0.195px;font-weight:700;">Office Theme</span>
<div class="b" style="left:403px;top:386px;width:135px;height:123px;background:#D2D0CE;border:1px solid #8E8E8A;"></div>
<div class="b" style="left:274px;top:149px;width:124px;height:71px;background:#fff;border:1px solid #5E6B88;"></div>
<div class="b" style="left:408px;top:149px;width:124px;height:71px;background:#fff;border:1px solid #5E6B88;"></div>
<div class="b" style="left:542px;top:149px;width:124px;height:71px;background:#fff;border:1px solid #5E6B88;"></div>
<div class="b" style="left:274px;top:270px;width:124px;height:71px;background:#fff;border:1px solid #5E6B88;"></div>
<div class="b" style="left:408px;top:270px;width:124px;height:71px;background:#fff;border:1px solid #5E6B88;"></div>
<div class="b" style="left:542px;top:270px;width:124px;height:71px;background:#fff;border:1px solid #5E6B88;"></div>
<div class="b" style="left:274px;top:391px;width:124px;height:71px;background:#fff;border:1px solid #5E6B88;"></div>
<div class="b" style="left:408px;top:391px;width:125px;height:73px;background:#fff;border:1px solid #5E6B88;"></div>
<div class="b" style="left:274px;top:514px;width:124px;height:71px;background:#fff;border:1px solid #5E6B88;"></div>
<svg class="b" style="left:267px;top:113px" width="427" height="531" viewBox="267 113 427 531"><path d="M292.0 162.5 H382.0" stroke="#7C7C7C" stroke-width="1" stroke-dasharray="2 1"/><path d="M293.0 203.5 H382.0" stroke="#9A9A9A" stroke-width="1" stroke-dasharray="2 1"/><path d="M293.0 204.25 H382.0" stroke="#D8D8D8" stroke-width="0.5" stroke-dasharray="2 1"/><path d="M292.5 162.0 V203.5 M381.5 163.0 V203.5" stroke="#141414" stroke-width="1" stroke-dasharray="1 2"/><path d="M292 187 H382" stroke="#8E8E8E" stroke-width="2" stroke-dasharray="2 1"/><path d="M419.0 155.5 H523.0" stroke="#7C7C7C" stroke-width="1" stroke-dasharray="2 1"/><path d="M420.0 212.5 H523.0" stroke="#9A9A9A" stroke-width="1" stroke-dasharray="2 1"/><path d="M420.0 213.25 H523.0" stroke="#D8D8D8" stroke-width="0.5" stroke-dasharray="2 1"/><path d="M419.5 155.0 V212.5 M522.5 156.0 V212.5" stroke="#141414" stroke-width="1" stroke-dasharray="1 2"/><path d="M419 169 H523" stroke="#8E8E8E" stroke-width="2" stroke-dasharray="2 1"/><g transform="translate(448.0,182.5)" fill="none" stroke-width="0.9"><rect x="0.5" y="0.8" width="9.6" height="5" rx="1" stroke="#B9B9B9"/><rect x="11.5" y="0.8" width="9.6" height="5" rx="1" stroke="#B9B9B9"/><circle cx="8" cy="5" r="2.3" fill="#6AAEE6" stroke="none"/><path d="M15 4.4 H22" stroke="#6AAEE6" stroke-width="1.4"/><circle cx="28" cy="2.6" r="3" fill="#6AAEE6" stroke="none"/><circle cx="28.6" cy="4.6" r="2.4" stroke="#B9B9B9" fill="#fff"/><path d="M33.4 1 H40 L42.6 3.4 H36 Z" fill="#7CC58A" stroke="none"/><rect x="37.4" y="3" width="6" height="3.4" stroke="#B9B9B9" fill="#fff"/><rect x="1.5" y="8.4" width="8.6" height="6" rx="2" stroke="#B9B9B9"/><circle cx="8" cy="13" r="2.3" fill="#6AAEE6" stroke="none"/><rect x="11.5" y="8.4" width="9.6" height="6" rx="1" stroke="#B9B9B9"/><rect x="22.6" y="8" width="9.8" height="6.6" rx="1" stroke="#B9B9B9"/><path d="M25.8 8 V14.6 M29.2 8 V14.6 M22.6 11.4 H32.4" stroke="#B9B9B9" stroke-width="0.7"/><rect x="35" y="10.6" width="2.4" height="4" fill="#B9B9B9" stroke="none"/><rect x="37.8" y="8" width="2.4" height="6.6" stroke="#B9B9B9" fill="#fff"/><rect x="40.6" y="9" width="2.6" height="5.6" fill="#6AAEE6" stroke="none"/></g><path d="M553.0 168.5 H657.0" stroke="#7C7C7C" stroke-width="1" stroke-dasharray="2 1"/><path d="M554.0 211.5 H657.0" stroke="#9A9A9A" stroke-width="1" stroke-dasharray="2 1"/><path d="M554.0 212.25 H657.0" stroke="#D8D8D8" stroke-width="0.5" stroke-dasharray="2 1"/><path d="M553.5 168.0 V211.5 M656.5 169.0 V211.5" stroke="#141414" stroke-width="1" stroke-dasharray="1 2"/><path d="M553 196 H657" stroke="#8E8E8E" stroke-width="2" stroke-dasharray="2 1"/><path d="M285.0 276.5 H389.0" stroke="#7C7C7C" stroke-width="1" stroke-dasharray="2 1"/><path d="M286.0 333.5 H389.0" stroke="#9A9A9A" stroke-width="1" stroke-dasharray="2 1"/><path d="M286.0 334.25 H389.0" stroke="#D8D8D8" stroke-width="0.5" stroke-dasharray="2 1"/><path d="M285.5 276.0 V333.5 M388.5 277.0 V333.5" stroke="#141414" stroke-width="1" stroke-dasharray="1 2"/><path d="M285 289.5 H389" stroke="#555" stroke-width="1" stroke-dasharray="2 1"/><path d="M337 290 V333" stroke="#3A3A3A" stroke-width="2" stroke-dasharray="1 1"/><g transform="translate(288.6,303.5)" fill="none" stroke-width="0.9"><rect x="0.5" y="0.8" width="9.6" height="5" rx="1" stroke="#B9B9B9"/><rect x="11.5" y="0.8" width="9.6" height="5" rx="1" stroke="#B9B9B9"/><circle cx="8" cy="5" r="2.3" fill="#6AAEE6" stroke="none"/><path d="M15 4.4 H22" stroke="#6AAEE6" stroke-width="1.4"/><circle cx="28" cy="2.6" r="3" fill="#6AAEE6" stroke="none"/><circle cx="28.6" cy="4.6" r="2.4" stroke="#B9B9B9" fill="#fff"/><path d="M33.4 1 H40 L42.6 3.4 H36 Z" fill="#7CC58A" stroke="none"/><rect x="37.4" y="3" width="6" height="3.4" stroke="#B9B9B9" fill="#fff"/><rect x="1.5" y="8.4" width="8.6" height="6" rx="2" stroke="#B9B9B9"/><circle cx="8" cy="13" r="2.3" fill="#6AAEE6" stroke="none"/><rect x="11.5" y="8.4" width="9.6" height="6" rx="1" stroke="#B9B9B9"/><rect x="22.6" y="8" width="9.8" height="6.6" rx="1" stroke="#B9B9B9"/><path d="M25.8 8 V14.6 M29.2 8 V14.6 M22.6 11.4 H32.4" stroke="#B9B9B9" stroke-width="0.7"/><rect x="35" y="10.6" width="2.4" height="4" fill="#B9B9B9" stroke="none"/><rect x="37.8" y="8" width="2.4" height="6.6" stroke="#B9B9B9" fill="#fff"/><rect x="40.6" y="9" width="2.6" height="5.6" fill="#6AAEE6" stroke="none"/></g><g transform="translate(340.6,303.5)" fill="none" stroke-width="0.9"><rect x="0.5" y="0.8" width="9.6" height="5" rx="1" stroke="#B9B9B9"/><rect x="11.5" y="0.8" width="9.6" height="5" rx="1" stroke="#B9B9B9"/><circle cx="8" cy="5" r="2.3" fill="#6AAEE6" stroke="none"/><path d="M15 4.4 H22" stroke="#6AAEE6" stroke-width="1.4"/><circle cx="28" cy="2.6" r="3" fill="#6AAEE6" stroke="none"/><circle cx="28.6" cy="4.6" r="2.4" stroke="#B9B9B9" fill="#fff"/><path d="M33.4 1 H40 L42.6 3.4 H36 Z" fill="#7CC58A" stroke="none"/><rect x="37.4" y="3" width="6" height="3.4" stroke="#B9B9B9" fill="#fff"/><rect x="1.5" y="8.4" width="8.6" height="6" rx="2" stroke="#B9B9B9"/><circle cx="8" cy="13" r="2.3" fill="#6AAEE6" stroke="none"/><rect x="11.5" y="8.4" width="9.6" height="6" rx="1" stroke="#B9B9B9"/><rect x="22.6" y="8" width="9.8" height="6.6" rx="1" stroke="#B9B9B9"/><path d="M25.8 8 V14.6 M29.2 8 V14.6 M22.6 11.4 H32.4" stroke="#B9B9B9" stroke-width="0.7"/><rect x="35" y="10.6" width="2.4" height="4" fill="#B9B9B9" stroke="none"/><rect x="37.8" y="8" width="2.4" height="6.6" stroke="#B9B9B9" fill="#fff"/><rect x="40.6" y="9" width="2.6" height="5.6" fill="#6AAEE6" stroke="none"/></g><path d="M419.0 276.5 H523.0" stroke="#7C7C7C" stroke-width="1" stroke-dasharray="2 1"/><path d="M420.0 333.5 H523.0" stroke="#9A9A9A" stroke-width="1" stroke-dasharray="2 1"/><path d="M420.0 334.25 H523.0" stroke="#D8D8D8" stroke-width="0.5" stroke-dasharray="2 1"/><path d="M419.5 276.0 V333.5 M522.5 277.0 V333.5" stroke="#141414" stroke-width="1" stroke-dasharray="1 2"/><path d="M419 289.5 H523" stroke="#555" stroke-width="1" stroke-dasharray="2 1"/><path d="M419 297.5 H523" stroke="#555" stroke-width="1" stroke-dasharray="2 1"/><path d="M471 290 V333" stroke="#3A3A3A" stroke-width="2" stroke-dasharray="1 1"/><g transform="translate(422.6,306.5)" fill="none" stroke-width="0.9"><rect x="0.5" y="0.8" width="9.6" height="5" rx="1" stroke="#B9B9B9"/><rect x="11.5" y="0.8" width="9.6" height="5" rx="1" stroke="#B9B9B9"/><circle cx="8" cy="5" r="2.3" fill="#6AAEE6" stroke="none"/><path d="M15 4.4 H22" stroke="#6AAEE6" stroke-width="1.4"/><circle cx="28" cy="2.6" r="3" fill="#6AAEE6" stroke="none"/><circle cx="28.6" cy="4.6" r="2.4" stroke="#B9B9B9" fill="#fff"/><path d="M33.4 1 H40 L42.6 3.4 H36 Z" fill="#7CC58A" stroke="none"/><rect x="37.4" y="3" width="6" height="3.4" stroke="#B9B9B9" fill="#fff"/><rect x="1.5" y="8.4" width="8.6" height="6" rx="2" stroke="#B9B9B9"/><circle cx="8" cy="13" r="2.3" fill="#6AAEE6" stroke="none"/><rect x="11.5" y="8.4" width="9.6" height="6" rx="1" stroke="#B9B9B9"/><rect x="22.6" y="8" width="9.8" height="6.6" rx="1" stroke="#B9B9B9"/><path d="M25.8 8 V14.6 M29.2 8 V14.6 M22.6 11.4 H32.4" stroke="#B9B9B9" stroke-width="0.7"/><rect x="35" y="10.6" width="2.4" height="4" fill="#B9B9B9" stroke="none"/><rect x="37.8" y="8" width="2.4" height="6.6" stroke="#B9B9B9" fill="#fff"/><rect x="40.6" y="9" width="2.6" height="5.6" fill="#6AAEE6" stroke="none"/></g><g transform="translate(474.6,306.5)" fill="none" stroke-width="0.9"><rect x="0.5" y="0.8" width="9.6" height="5" rx="1" stroke="#B9B9B9"/><rect x="11.5" y="0.8" width="9.6" height="5" rx="1" stroke="#B9B9B9"/><circle cx="8" cy="5" r="2.3" fill="#6AAEE6" stroke="none"/><path d="M15 4.4 H22" stroke="#6AAEE6" stroke-width="1.4"/><circle cx="28" cy="2.6" r="3" fill="#6AAEE6" stroke="none"/><circle cx="28.6" cy="4.6" r="2.4" stroke="#B9B9B9" fill="#fff"/><path d="M33.4 1 H40 L42.6 3.4 H36 Z" fill="#7CC58A" stroke="none"/><rect x="37.4" y="3" width="6" height="3.4" stroke="#B9B9B9" fill="#fff"/><rect x="1.5" y="8.4" width="8.6" height="6" rx="2" stroke="#B9B9B9"/><circle cx="8" cy="13" r="2.3" fill="#6AAEE6" stroke="none"/><rect x="11.5" y="8.4" width="9.6" height="6" rx="1" stroke="#B9B9B9"/><rect x="22.6" y="8" width="9.8" height="6.6" rx="1" stroke="#B9B9B9"/><path d="M25.8 8 V14.6 M29.2 8 V14.6 M22.6 11.4 H32.4" stroke="#B9B9B9" stroke-width="0.7"/><rect x="35" y="10.6" width="2.4" height="4" fill="#B9B9B9" stroke="none"/><rect x="37.8" y="8" width="2.4" height="6.6" stroke="#B9B9B9" fill="#fff"/><rect x="40.6" y="9" width="2.6" height="5.6" fill="#6AAEE6" stroke="none"/></g><path d="M553.0 276.5 H657.0" stroke="#7C7C7C" stroke-width="1" stroke-dasharray="2 1"/><path d="M554.0 289.5 H657.0" stroke="#9A9A9A" stroke-width="1" stroke-dasharray="2 1"/><path d="M554.0 290.25 H657.0" stroke="#D8D8D8" stroke-width="0.5" stroke-dasharray="2 1"/><path d="M553.5 276.0 V289.5 M656.5 277.0 V289.5" stroke="#141414" stroke-width="1" stroke-dasharray="1 2"/><path d="M553 289.5 H657" stroke="#555" stroke-width="1" stroke-dasharray="2 1"/><path d="M419.0 398.5 H458.0" stroke="#7C7C7C" stroke-width="1" stroke-dasharray="2 1"/><path d="M420.0 452.5 H458.0" stroke="#9A9A9A" stroke-width="1" stroke-dasharray="2 1"/><path d="M420.0 453.25 H458.0" stroke="#D8D8D8" stroke-width="0.5" stroke-dasharray="2 1"/><path d="M419.5 398.0 V452.5 M457.5 399.0 V452.5" stroke="#141414" stroke-width="1" stroke-dasharray="1 2"/><path d="M419 415 H458" stroke="#8E8E8E" stroke-width="2" stroke-dasharray="2 1"/><path d="M462.0 403.5 H524.0" stroke="#7C7C7C" stroke-width="1" stroke-dasharray="2 1"/><path d="M463.0 452.5 H524.0" stroke="#9A9A9A" stroke-width="1" stroke-dasharray="2 1"/><path d="M463.0 453.25 H524.0" stroke="#D8D8D8" stroke-width="0.5" stroke-dasharray="2 1"/><path d="M462.5 403.0 V452.5 M523.5 404.0 V452.5" stroke="#141414" stroke-width="1" stroke-dasharray="1 2"/><g transform="translate(469.4,419.7)" fill="none" stroke-width="0.9"><rect x="0.5" y="0.8" width="9.6" height="5" rx="1" stroke="#B9B9B9"/><rect x="11.5" y="0.8" width="9.6" height="5" rx="1" stroke="#B9B9B9"/><circle cx="8" cy="5" r="2.3" fill="#6AAEE6" stroke="none"/><path d="M15 4.4 H22" stroke="#6AAEE6" stroke-width="1.4"/><circle cx="28" cy="2.6" r="3" fill="#6AAEE6" stroke="none"/><circle cx="28.6" cy="4.6" r="2.4" stroke="#B9B9B9" fill="#fff"/><path d="M33.4 1 H40 L42.6 3.4 H36 Z" fill="#7CC58A" stroke="none"/><rect x="37.4" y="3" width="6" height="3.4" stroke="#B9B9B9" fill="#fff"/><rect x="1.5" y="8.4" width="8.6" height="6" rx="2" stroke="#B9B9B9"/><circle cx="8" cy="13" r="2.3" fill="#6AAEE6" stroke="none"/><rect x="11.5" y="8.4" width="9.6" height="6" rx="1" stroke="#B9B9B9"/><rect x="22.6" y="8" width="9.8" height="6.6" rx="1" stroke="#B9B9B9"/><path d="M25.8 8 V14.6 M29.2 8 V14.6 M22.6 11.4 H32.4" stroke="#B9B9B9" stroke-width="0.7"/><rect x="35" y="10.6" width="2.4" height="4" fill="#B9B9B9" stroke="none"/><rect x="37.8" y="8" width="2.4" height="6.6" stroke="#B9B9B9" fill="#fff"/><rect x="40.6" y="9" width="2.6" height="5.6" fill="#6AAEE6" stroke="none"/></g><path d="M285.0 521.5 H324.0" stroke="#7C7C7C" stroke-width="1" stroke-dasharray="2 1"/><path d="M286.0 574.5 H324.0" stroke="#9A9A9A" stroke-width="1" stroke-dasharray="2 1"/><path d="M286.0 575.25 H324.0" stroke="#D8D8D8" stroke-width="0.5" stroke-dasharray="2 1"/><path d="M285.5 521.0 V574.5 M323.5 522.0 V574.5" stroke="#141414" stroke-width="1" stroke-dasharray="1 2"/><path d="M285 537 H324" stroke="#8E8E8E" stroke-width="2" stroke-dasharray="2 1"/><path d="M328.0 526.5 H389.0" stroke="#7C7C7C" stroke-width="1" stroke-dasharray="2 1"/><path d="M329.0 574.5 H389.0" stroke="#9A9A9A" stroke-width="1" stroke-dasharray="2 1"/><path d="M329.0 575.25 H389.0" stroke="#D8D8D8" stroke-width="0.5" stroke-dasharray="2 1"/><path d="M328.5 526.0 V574.5 M388.5 527.0 V574.5" stroke="#141414" stroke-width="1" stroke-dasharray="1 2"/><g transform="translate(352.4,546)" fill="none" stroke-width="0.9"><rect x="0.4" y="0.4" width="9.6" height="5.4" rx="1" stroke="#B9B9B9"/><path d="M2 3.6 H8" stroke="#6AAEE6"/><path d="M5 6.4 H8.6" stroke="#6AAEE6" stroke-width="1"/></g><g fill="#8A8A8A"><rect x="686" y="632.4" width="1.6" height="1.6"/><rect x="686" y="636.6" width="1.6" height="1.6"/><rect x="681.8" y="636.6" width="1.6" height="1.6"/></g></svg>
<span class="t" style="left:303.55px;top:221.00px;font-size:14.5px;line-height:20px;color:#5C5C5C;letter-spacing:0.217px;">Title Slide</span>
<span class="t" style="left:413.40px;top:221.00px;font-size:14.5px;line-height:20px;color:#5C5C5C;letter-spacing:0.244px;">Title and Content</span>
<span class="t" style="left:553.00px;top:221.00px;font-size:14.5px;line-height:20px;color:#5C5C5C;letter-spacing:0.158px;">Section Header</span>
<span class="t" style="left:294.00px;top:342.00px;font-size:14.5px;line-height:20px;color:#5C5C5C;letter-spacing:0.259px;">Two Content</span>
<span class="t" style="left:430.00px;top:342.00px;font-size:14.5px;line-height:20px;color:#5C5C5C;letter-spacing:0.203px;">Comparison</span>
<span class="t" style="left:572.70px;top:342.00px;font-size:14.5px;line-height:20px;color:#5C5C5C;letter-spacing:0.211px;">Title Only</span>
<span class="t" style="left:318.40px;top:463.00px;font-size:14.5px;line-height:20px;color:#5C5C5C;letter-spacing:-0.068px;">Blank</span>
<span class="t" style="left:428.00px;top:465.00px;font-size:14.5px;line-height:20px;color:#3C3C3C;letter-spacing:0.309px;">Content with</span>
<span class="t" style="left:444.00px;top:485.00px;font-size:14.5px;line-height:20px;color:#3C3C3C;letter-spacing:0.337px;">Caption</span>
<span class="t" style="left:297.10px;top:586.00px;font-size:14.5px;line-height:20px;color:#5C5C5C;letter-spacing:0.187px;">Picture with</span>
<span class="t" style="left:310.00px;top:606.00px;font-size:14.5px;line-height:20px;color:#5C5C5C;letter-spacing:0.337px;">Caption</span>
<!-- sec_status -->
<div class="b" style="left:0px;top:993px;width:1919px;height:23px;background:#F3F3F3;border-top:1px solid #C8C8C8;"></div>
<span class="t" style="left:15.00px;top:998.00px;font-size:12.9px;line-height:19px;color:#3B3B3B;letter-spacing:0.114px;">Slide 2 of 8</span>
<svg class="b" style="left:104px;top:997px;" width="22" height="19" viewBox="0 0 22 19"><path d="M1.4 2.6 H9.4 V14.4 H1.4 Z M9.4 2.6 H17.6 V5 M17.6 10.6 V14.4 H9.4" fill="none" stroke="#8A8A8A" stroke-width="1"/><path d="M7.8 14.6 L9.4 16.4 L11 14.6" fill="none" stroke="#8A8A8A" stroke-width="1"/><path d="M11.8 8.6 L14 11 L18.8 5.8" fill="none" stroke="#8A8A8A" stroke-width="1.5"/></svg>
<span class="t" style="left:144.20px;top:998.00px;font-size:12.9px;line-height:19px;color:#3B3B3B;letter-spacing:-0.154px;">English (India)</span>
<svg class="b" style="left:245px;top:997px;" width="22" height="19" viewBox="0 0 22 19"><path d="M5.6 4 A6.8 6.8 0 0 0 8.8 16.6" fill="none" stroke="#4A4A4A" stroke-width="1.1" stroke-dasharray="3 1.8"/><path d="M8.6 2.2 V9 M6.4 7 L8.6 9.2 L10.8 7 M10 8.6 H16 M14 6.4 L16.2 8.6 L14 10.8" fill="none" stroke="#4A4A4A" stroke-width="1.1"/><path d="M10.8 11.4 L18.8 19.4 M18.8 11.4 L10.8 19.4" stroke="#2E2E2E" stroke-width="1.9"/></svg>
<span class="t" style="left:268.00px;top:998.00px;font-size:12.9px;line-height:19px;color:#262626;letter-spacing:-0.086px;font-weight:700;">Accessibility: Investigate</span>
<svg class="b" style="left:1287px;top:998px;" width="16" height="18" viewBox="0 0 16 18"><path d="M1.8 7 H15 M1.8 9.5 H15 M1.8 12 H15 M1.8 14.5 H8.6" stroke="#5E5E5E" stroke-width="1"/><path d="M5.4 5.4 L8.9 2 L12.4 5.4 Z" fill="#4A4A4A"/></svg>
<span class="t" style="left:1308.50px;top:998.00px;font-size:12.9px;line-height:19px;color:#3B3B3B;letter-spacing:0.200px;">Notes</span>
<svg class="b" style="left:1367px;top:998px;" width="20" height="18" viewBox="0 0 20 18"><path d="M2.6 1 H17.4 Q18.8 1 18.8 2.4 V11.4 Q18.8 12.8 17.4 12.8 H8.4 L5.2 16.4 V12.8 H2.6 Q1.2 12.8 1.2 11.4 V2.4 Q1.2 1 2.6 1 Z" fill="#5E5E5E"/></svg>
<span class="t" style="left:1389.00px;top:998.00px;font-size:12.9px;line-height:19px;color:#3B3B3B;letter-spacing:0.019px;">Comments</span>
<div class="b" style="left:1475px;top:994px;width:50px;height:22px;background:#C8C8C8;"></div>
<svg class="b" style="left:1480px;top:994px" width="190" height="22" viewBox="1480 994 190 22" fill="none" stroke="#727272" stroke-width="1">
<rect x="1491.5" y="999.5" width="16" height="15"/>
<path d="M1495.5 999.5 V1014.5 M1495.5 1009.5 H1507.5"/>
<rect x="1498.5" y="1002.5" width="6" height="4"/>
<rect x="1541.5" y="999.5" width="6" height="5"/><rect x="1550.5" y="999.5" width="6" height="5"/>
<rect x="1541.5" y="1008.5" width="6" height="5"/><rect x="1550.5" y="1008.5" width="6" height="5"/>
<path d="M1599.5 1000.6 Q1598.6 999.5 1597 999.5 H1591.5 V1011.5 H1597 Q1598.6 1011.5 1599.5 1012.6 Q1600.4 1011.5 1602 1011.5 H1607.5 V999.5 H1602 Q1600.4 999.5 1599.5 1000.6 Z M1599.5 1000.6 V1013.6"/>
<path d="M1593.4 1002.5 H1597.6 M1593.4 1004.5 H1597.6 M1593.4 1006.5 H1597.6 M1593.4 1008.5 H1597.6 M1601.4 1002.5 H1605.6 M1601.4 1004.5 H1605.6 M1601.4 1006.5 H1605.6 M1601.4 1008.5 H1605.6" stroke-width="0.9"/>
<path d="M1641 1000 H1658" stroke-width="1.7"/>
<path d="M1643.5 1000.6 V1008 H1655.5 V1000.6 M1646.6 1003.6 H1652.6 M1649.5 1008 V1013.2 M1647 1013.4 H1652.2"/>
</svg>
<svg class="b" style="left:1680px;top:1000px;" width="165" height="14" viewBox="0 0 165 14"><path d="M2 7.4 H11.4 M149.2 7.4 H158.8 M154 2.6 V12.2" stroke="#3B3B3B" stroke-width="1.1" fill="none"/><path d="M18.2 7.5 H143.4" stroke="#4E4E4E" stroke-width="1"/><path d="M80.5 4 V11" stroke="#4E4E4E" stroke-width="1"/><rect x="65.2" y="-0.2" width="6" height="14.4" fill="#444"/></svg>
<span class="t" style="left:1855.00px;top:998.00px;font-size:12.9px;line-height:19px;color:#3B3B3B;letter-spacing:-1.209px;">81%</span>
<svg class="b" style="left:1897px;top:998px;" width="16" height="18" viewBox="0 0 16 18"><g fill="none" stroke="#727272" stroke-width="1"><rect x="1.5" y="2.5" width="13" height="13"/><path d="M8 4.6 V7 M8 11 V13.4 M3.6 9 H6 M10 9 H12.4"/><path d="M6.6 5.8 L8 4.4 L9.4 5.8 M6.6 12.2 L8 13.6 L9.4 12.2 M4.8 7.6 L3.4 9 L4.8 10.4 M11.2 7.6 L12.6 9 L11.2 10.4" stroke-width="0.9"/></g></svg>
</div>
</body></html>
